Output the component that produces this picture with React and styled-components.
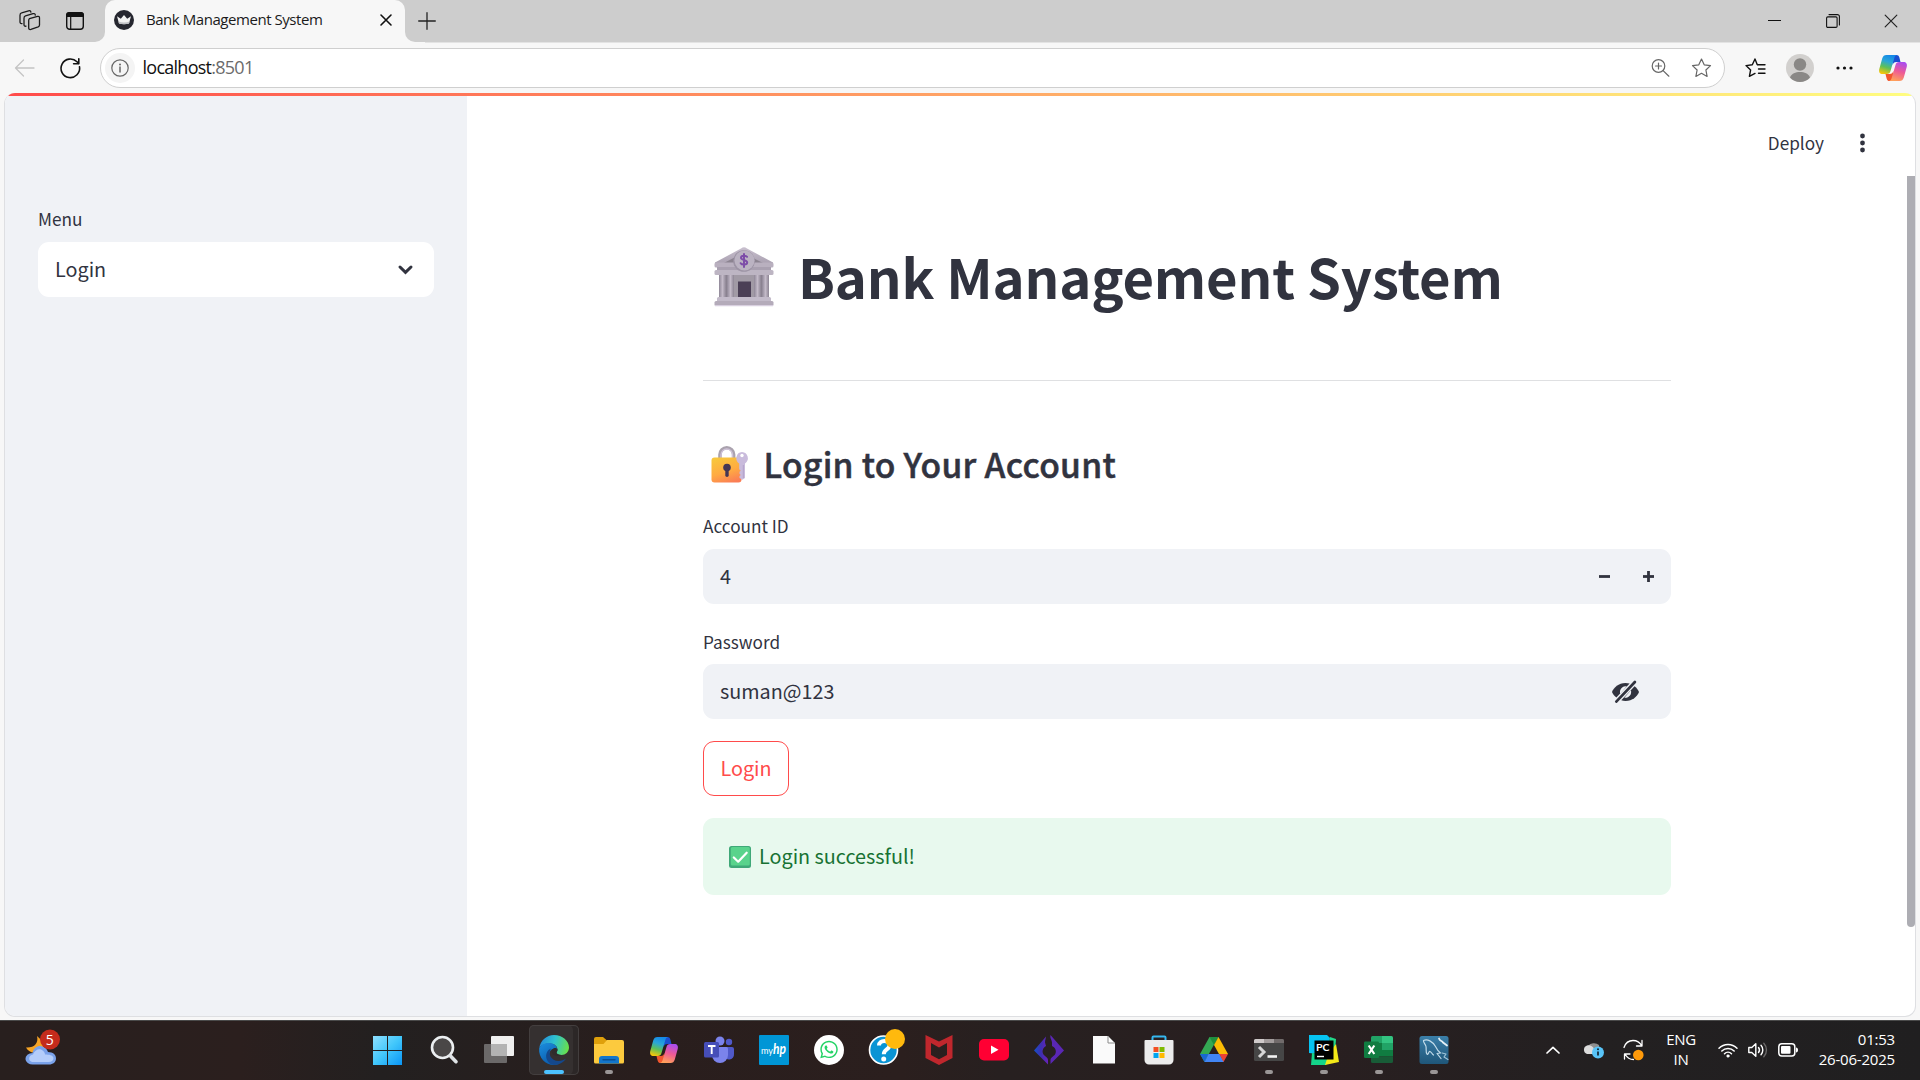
import React from "react";
import styled, { createGlobalStyle } from "styled-components";
import { FaWhatsapp } from "react-icons/fa";

const sourceFont = `"Noto Sans CJK SC", "Noto Sans", sans-serif`;
const systemFont = `"Open Sans", "Noto Sans", sans-serif`;

const GlobalStyle = createGlobalStyle`
  * { box-sizing: border-box; }
  body { margin: 0; overflow: hidden; background: #f7f7f7; }
  svg { display: block; flex: none; overflow: visible; }
  button { margin: 0; padding: 0; border: 0; background: none; color: inherit; font: inherit; }
`;

const Screen = styled.div`
  width: 1920px;
  height: 1080px;
  display: flex;
  flex-direction: column;
  overflow: hidden;
  background: #f7f7f7;
  font-family: ${systemFont};
  color: #1b1b1b;
`;

/* ---------- browser chrome ---------- */

const TabStrip = styled.header`
  height: 43px;
  display: flex;
  background: #cdcdcd;
  border-bottom: 1px solid #e3e3e3;
`;

const StripLeft = styled.div`
  width: 105px;
  height: 42px;
  padding-left: 19px;
  display: flex;
  align-items: center;
  gap: 25px;
  background: #cdcdcd;
  border-bottom-right-radius: 10px;
`;

const CornerBack = styled.div`
  height: 43px;
  background: #f7f7f7;
`;

const Tab = styled.div`
  width: 300px;
  height: 43px;
  padding: 0 13px 3px 9px;
  display: flex;
  align-items: center;
  background: #f7f7f7;
  border-radius: 10px 10px 0 0;
`;

const TabBack = styled.div`
  height: 43px;
  background: linear-gradient(#cdcdcd 50%, #f7f7f7 50%);
`;

const TabTitle = styled.span`
  flex: 1;
  margin-left: 12px;
  font-size: 15px;
  line-height: 22px;
  padding-bottom: 2px;
  letter-spacing: -0.45px;
  white-space: nowrap;
`;

const StripRight = styled.div`
  flex: 1;
  height: 42px;
  padding: 0 22px 0 13px;
  display: flex;
  align-items: center;
  justify-content: space-between;
  background: #cdcdcd;
  border-bottom-left-radius: 10px;
`;

const StripFill = styled.div`
  flex: 1;
  display: flex;
  height: 43px;
  background: linear-gradient(90deg, #f7f7f7 20px, #e3e3e3 20px);
`;

const WindowButtons = styled.div`
  display: flex;
  align-items: center;
  gap: 44.5px;
`;

const Toolbar = styled.div`
  height: 50px;
  padding: 5px 13px 5px 14px;
  display: flex;
  align-items: center;
`;

const NavButtons = styled.div`
  width: 86px;
  display: flex;
  align-items: center;
  gap: 25px;
`;

const AddressBar = styled.div`
  width: 1625px;
  height: 40px;
  padding: 0 12px 0 4px;
  display: flex;
  align-items: center;
  background: #fff;
  border: 1px solid #cfcfcf;
  border-radius: 20px;
`;

const InfoBadge = styled.span`
  width: 30px;
  height: 30px;
  display: grid;
  place-items: center;
  border-radius: 50%;
  background: #f4f4f4;
`;

const Address = styled.span`
  flex: 1;
  margin-left: 7.5px;
  font-size: 18px;
  line-height: 28px;
  letter-spacing: -0.74px;
  padding-bottom: 2px;
  color: #111;
`;

const Port = styled.span`
  color: #6b6b6b;
`;

const AddressActions = styled.div`
  display: flex;
  align-items: center;
  gap: 20px;
`;

const ToolbarActions = styled.div`
  flex: 1;
  display: flex;
  align-items: center;
  justify-content: flex-end;
  gap: 20px;
`;

/* ---------- web page ---------- */

const PageFrame = styled.section`
  width: 1912px;
  height: 924px;
  margin: 0 0 3px 4px;
  border: 1px solid #dedfe2;
  border-top: 0;
  border-radius: 11px;
  overflow: hidden;
  display: flex;
  flex-direction: column;
  background: #fff;
  font-family: ${sourceFont};
  color: #31333f;
`;

const Decoration = styled.div`
  height: 3px;
  flex: none;
  background: linear-gradient(90deg, #ff4b4b, #fffd80);
`;

const PageBody = styled.div`
  flex: 1;
  display: flex;
`;

const Sidebar = styled.aside`
  width: 462px;
  padding: 111px 33px 0;
  background: #f0f2f6;
`;

const Label = styled.label`
  display: block;
  height: 26px;
  font-size: 17.2px;
  line-height: ${(p) => p.$line || 26}px;
`;

const Field = styled.div`
  height: 55px;
  margin-top: ${(p) => p.$gap || 10}px;
  padding: 0 ${(p) => p.$end}px 0 17px;
  display: flex;
  align-items: center;
  justify-content: space-between;
  border-radius: 11px;
  background: ${(p) => (p.$light ? "#fff" : "#f0f2f6")};
`;

const Value = styled.span`
  font-size: 19.8px;
  line-height: 30px;
  padding-bottom: 2px;
  white-space: nowrap;
`;

const Main = styled.main`
  flex: 1;
  display: flex;
  flex-direction: column;
`;

const AppHeader = styled.div`
  height: 94px;
  padding-right: 42px;
  display: flex;
  align-items: center;
  justify-content: flex-end;
  gap: 36px;
`;

const Deploy = styled.span`
  font-size: 17.2px;
  line-height: 26px;
  padding-bottom: 1px;
`;

const Content = styled.div`
  width: 968px;
  margin-left: 236px;
  padding-top: 50px;
  display: flex;
  flex-direction: column;
`;

const Title = styled.h1`
  height: 72px;
  margin: 0;
  padding-left: 11px;
  display: flex;
  align-items: center;
  gap: 24px;
  font-size: 54.4px;
  line-height: 72px;
  font-weight: 700;
  letter-spacing: -0.18px;
  white-space: nowrap;
`;

const Rule = styled.hr`
  width: 100%;
  height: 1px;
  margin: 68px 0 58px;
  border: 0;
  background: #dfe0e2;
`;

const Subtitle = styled.h3`
  height: 50px;
  margin: 0 0 24px;
  padding-left: 8px;
  display: flex;
  align-items: center;
  gap: 14.5px;
  font-size: 33.6px;
  line-height: 50px;
  font-weight: 500;
  letter-spacing: 0.28px;
  -webkit-text-stroke: 0.5px currentColor;
  white-space: nowrap;
`;

const FormGroup = styled.div`
  margin-bottom: ${(p) => p.$after}px;
`;

const Steppers = styled.div`
  display: flex;
  gap: 33px;
`;

const LoginButton = styled.button`
  width: 86px;
  height: 55px;
  border: 1px solid #ff4b4b;
  border-radius: 11px;
  color: #ff4b4b;
  display: grid;
  place-items: center;
`;

const Alert = styled.div`
  height: 77px;
  margin-top: 22px;
  padding-left: 26px;
  display: flex;
  align-items: center;
  gap: 8px;
  border-radius: 11px;
  background: #e8f9ee;
  color: #177233;
`;

const Scrollbar = styled.div`
  width: 8px;
  height: 751px;
  margin-top: 80px;
  border-radius: 0 0 4px 4px;
  background: #adadb3;
`;

/* ---------- taskbar ---------- */

const Taskbar = styled.footer`
  height: 60px;
  display: flex;
  align-items: stretch;
  border-top: 1px solid #4a4a4a;
  background: linear-gradient(90deg, #281f1e 0, #2b1f1e 240px, #232020 380px, #291e1d 640px, #2b1f1e 900px, #272020 1000px, #291f20 1300px, #232021 1600px, #201f20 1920px);
  color: #fff;
`;

const WeatherSlot = styled.div`
  width: 361px;
  padding: 0 0 7px 25px;
  display: flex;
  align-items: center;
`;

const AppSlot = styled.div`
  width: 55px;
  padding-bottom: 1px;
  display: flex;
  align-items: center;
  justify-content: center;
`;

const AppTile = styled.div`
  width: 50px;
  height: 50px;
  display: flex;
  flex-direction: column;
  align-items: center;
  padding-top: 10px;
  gap: 5px;
  border-radius: 5px;
  background: ${(p) => (p.$active ? "#353030" : "transparent")};
  box-shadow: ${(p) => (p.$active ? "inset 0 0 0 1px #433e3e, inset -6px 0 0 #2c2727" : "none")};
`;

const RunMark = styled.span`
  width: ${(p) => (p.$state === "active" ? 20 : 8)}px;
  height: 4px;
  border-radius: 2px;
  background: ${(p) => (p.$state === "active" ? "#4cc2ff" : p.$state ? "#9a9696" : "transparent")};
`;

const Tray = styled.div`
  flex: 1;
  padding: 0 24.5px 1px 85px;
  display: flex;
  align-items: center;
`;

const TrayItem = styled.span`
  margin-right: ${(p) => p.$after}px;
`;

const TrayText = styled.div`
  width: ${(p) => p.$w}px;
  margin-right: ${(p) => p.$after || 0}px;
  font-size: 15px;
  line-height: 20px;
  text-align: ${(p) => p.$align};
  letter-spacing: ${(p) => p.$track}px;
  padding-bottom: 2px;
  white-space: nowrap;
`;

/* ---------- drawings ---------- */

const line = (w, c = "#1b1b1b") => ({
  fill: "none",
  stroke: c,
  strokeWidth: w,
  strokeLinecap: "round",
  strokeLinejoin: "round",
});

const WorkspacesIcon = () => (
  <svg width="22" height="22" viewBox="0 0 22 22" {...line(1.3)}>
    <path d="M10.5 9.2l8-2.2c1.2-.3 2 .3 2 1.400v7.300c0 .9-.5 1.500-1.300 1.800l-7.300 2.500c-1.300.4-2.200-.2-2.200-1.500v-7.300c0-1 .1-1.700.8-2z" transform="translate(0 -.6)" />
    <path d="M7 16.200c-1.200.2-2-.3-2-1.500V8.200c0-1.200.4-1.900 1.500-2.300l7.500-2.200c1.400-.4 2.200.1 2.300 1.400" />
    <path d="M3 13.600c-1.300.2-2-.4-2-1.600V5.200C1 4 1.500 3.200 2.600 2.900l7-2.100c1.300-.3 2.100.1 2.300 1.300" />
  </svg>
);

const TabActionsIcon = () => (
  <svg width="18" height="18" viewBox="0 0 18 18">
    <rect x=".7" y=".7" width="16.600" height="16.600" rx="3" {...line(1.400, "#111")} />
    <path d="M0 5V3.200A3.200 3.200 0 0 1 3.200 0h11.600A3.200 3.200 0 0 1 18 3.200V5z" fill="#111" />
    <path d="M4.700 5v12" {...line(1.200, "#111")} />
  </svg>
);

const CrownFavicon = () => (
  <svg width="20" height="20" viewBox="0 0 20 20">
    <circle cx="10" cy="10" r="10" fill="#262730" />
    <path d="M3 6.300l3.800 2.500L10 5l3.200 3.800L17 6.300l-2 7.200c-3 1-7 1-10 0z" fill="#f2f2f2" />
    <path d="M4.400 11.500c3.500 1.200 7.700 1.200 11.200 0l-.6 2c-3 1-7 1-10 0z" fill="#bfc0c4" />
  </svg>
);

const CloseIcon = ({ size, w, c }) => (
  <svg width={size} height={size} viewBox="0 0 12 12">
    <path d="M1 1l10 10M11 1L1 11" {...line(w, c)} />
  </svg>
);

const PlusIcon = () => (
  <svg width="18" height="18" viewBox="0 0 18 18">
    <path d="M9 .7v16.600M.7 9h16.600" {...line(1.300, "#222")} />
  </svg>
);

const BackIcon = () => (
  <svg width="21" height="18" viewBox="0 0 21 18">
    <path d="M20 9H1.500M9.500 1L1.500 9l8 8" {...line(1.300, "#c4c4c4")} />
  </svg>
);

const ReloadIcon = () => (
  <svg width="21" height="21" viewBox="0 0 21 21">
    <path d="M19.500 8.700A9.300 9.300 0 1 1 17 3.800l1.300 1.500" {...line(1.600, "#111")} />
    <path d="M18.800.8v5h-5.200" {...line(1.600, "#111")} />
  </svg>
);

const InfoIcon = () => (
  <svg width="18" height="18" viewBox="0 0 18 18">
    <circle cx="9" cy="9" r="8.200" {...line(1.200, "#666")} />
    <path d="M9 8v5" {...line(1.500, "#666")} />
    <circle cx="9" cy="5.400" r="1" fill="#666" />
  </svg>
);

const ZoomIcon = () => (
  <svg width="19" height="18" viewBox="0.500 0 19 18" {...line(1.200, "#666")}>
    <circle cx="7" cy="7" r="6.300" />
    <path d="M7 4v6M4 7h6M11.600 11.600l5.800 5.600" />
  </svg>
);

const starPath = "M10 1l2.700 5.800 6.300.8-4.600 4.400 1.200 6.400L10 15.300l-5.600 3.100 1.200-6.400L1 7.600l6.300-.8z";

const StarIcon = () => (
  <svg width="21" height="20" viewBox="0 0 20 20">
    <path d={starPath} {...line(1.200, "#666")} />
  </svg>
);

const FavoritesIcon = () => (
  <svg width="21" height="20" viewBox="0 0 21 20" {...line(1.400, "#111")}>
    <path d="M12.200 6.500L10 1 7.300 6.800 1 7.600 5.600 12l-1.200 6.400 5.600-3" />
    <path d="M12.500 6.700H20M13.500 11H20M13.500 15.300H20" />
  </svg>
);

const ProfileIcon = () => (
  <svg width="28" height="28" viewBox="0 0 28 28">
    <circle cx="14" cy="14" r="14" fill="#d2d0ce" />
    <circle cx="14" cy="10.500" r="6.200" fill="#8a8886" />
    <path d="M4 23.500c1.500-4 5.500-5.500 10-5.500s8.500 1.500 10 5.500C21.500 26.400 18 28 14 28S6.500 26.400 4 23.500z" fill="#8a8886" />
  </svg>
);

const MoreIcon = () => (
  <svg width="25" height="4" viewBox="-2 0 25 4" fill="#111">
    <circle cx="2" cy="2" r="1.600" />
    <circle cx="8.500" cy="2" r="1.600" />
    <circle cx="15" cy="2" r="1.600" />
  </svg>
);

const CopilotIcon = ({ id, w = 28 }) => (
  <svg width={w} height={(w * 26) / 28} viewBox="0 0 28 26">
    <defs>
      <linearGradient id={`${id}a`} x1="0.600" y1="0" x2="0.300" y2="1">
        <stop offset="0" stopColor="#1488e8" />
        <stop offset=".35" stopColor="#2aa6d8" />
        <stop offset=".65" stopColor="#5cc05a" />
        <stop offset="1" stopColor="#f7c60a" />
      </linearGradient>
      <linearGradient id={`${id}b`} x1="0.700" y1="0" x2="0.400" y2="1">
        <stop offset="0" stopColor="#a94df0" />
        <stop offset=".5" stopColor="#ee5a96" />
        <stop offset="1" stopColor="#ffa05a" />
      </linearGradient>
    </defs>
    <path d="M13 0h4.500c1.500 0 2.300.8 2.800 2.300L21.500 7h-4c-2.500 0-3.200 1-3.800 3z" fill="#1a4fd0" />
    <path d="M15 26h-4.500c-1.500 0-2.300-.8-2.800-2.300L6.500 19h4c2.500 0 3.200-1 3.800-3z" fill="#f2562e" />
    <path d="M7.500 0H18c-1.500.3-2.200 1.400-2.800 3.500L11.500 16c-.7 2.200-1.600 3-3.800 3H3.500C.8 19-.5 17 .3 14L3.200 3.500C4 1 5.200 0 7.500 0z" fill={`url(#${id}a)`} />
    <path d="M20.500 26H10c1.500-.3 2.200-1.400 2.800-3.500L16.500 10c.7-2.200 1.600-3 3.800-3h4.200c2.700 0 4 2 3.200 5l-2.900 10.500c-.8 2.500-2 3.500-4.300 3.500z" fill={`url(#${id}b)`} />
  </svg>
);

const BankEmoji = () => (
  <svg width="60" height="60" viewBox="0 -1 60 60">
    <defs>
      <linearGradient id="col" x1="0" x2="1">
        <stop offset="0" stopColor="#8f8797" />
        <stop offset=".5" stopColor="#c3bac8" />
        <stop offset="1" stopColor="#8d8594" />
      </linearGradient>
      <linearGradient id="slab" x1="0" y1="0" x2="0" y2="1">
        <stop offset="0" stopColor="#c9c0cf" />
        <stop offset="1" stopColor="#a39aaa" />
      </linearGradient>
    </defs>
    <path d="M5 26h50v27H5z" fill="#8a8290" />
    <path d="M20 26h20v27H20z" fill="#a19aa5" />
    <path d="M27 1.500Q30 -.8 33 1.500L59 15.500V20H1V15.500z" fill="url(#slab)" />
    <path d="M29 6L50 16.500H9z" fill="#8b8390" />
    <rect x="0.500" y="15.500" width="59" height="5" rx="1.500" fill="#b9b0bf" />
    <path d="M3 20h54v4H3z" fill="#a9a0b0" />
    <rect x="0.500" y="23" width="59" height="5" rx="1.500" fill="#bdb5c3" />
    {[5, 13, 40, 48].map((x) => (
      <rect key={x} x={x} y="28" width="7" height="23" fill="url(#col)" />
    ))}
    <rect x="24" y="34.500" width="13" height="16" fill="#4b3f56" />
    <rect x="3" y="50" width="54" height="5" rx="1.500" fill="#c3bbca" />
    <rect x="0.500" y="54" width="59" height="5" rx="1.500" fill="#b4abba" />
    <path d="M1 58.600h58" stroke="#d8cfdf" strokeWidth="1.200" />
    <circle cx="30" cy="14" r="10.800" fill="#9d94a5" />
    <circle cx="30.500" cy="13.500" r="10" fill="#bbb3c2" />
    <path d="M33 9.800c-.7-1.200-5.900-1.800-6 .9 0 2.800 6.200 1.700 6.200 4.800 0 2.700-5.600 2.400-6.500.7M30 7v13" {...line(2, "#7d4da8")} />
  </svg>
);

const LockEmoji = () => (
  <svg width="38" height="38" viewBox="0 0 38 38">
    <defs>
      <linearGradient id="lock" x1="0.300" y1="0" x2="0.700" y2="1">
        <stop offset="0" stopColor="#f8c63c" />
        <stop offset=".55" stopColor="#ffab42" />
        <stop offset="1" stopColor="#fb7d55" />
      </linearGradient>
    </defs>
    <path d="M9 14V9.500a6.800 6.800 0 0 1 13.600 0V14" fill="none" stroke="#aaa2ae" strokeWidth="3.600" />
    <path d="M10 14V9.700a5.800 5.800 0 0 1 11.600 0V14" fill="none" stroke="#cfc2d9" strokeWidth="1.300" />
    <rect x=".5" y="12.500" width="30" height="25" rx="3" fill="url(#lock)" />
    <circle cx="16" cy="22.500" r="3.800" fill="#443654" />
    <path d="M14.300 23h3.400v7.200a1.700 1.700 0 0 1-3.400 0z" fill="#443654" />
    <path d="M31 7a6.200 6.200 0 0 1 3 11.400V33l-2.600 1.800L28.500 33v-2l1.200-1-1.200-1.300v-2l1.200-1-1.500-1.500v-5.800A6.200 6.200 0 0 1 31 7z" fill="#c9bbdc" />
    <circle cx="31" cy="10.500" r="1.700" fill="#fff" />
    <path d="M32.300 20v13" stroke="#b3a3ca" strokeWidth="1" />
  </svg>
);

const CheckEmoji = () => (
  <svg width="22" height="22" viewBox="0 0 22 22">
    <rect width="22" height="22" rx="2.500" fill="#3fa878" />
    <rect x="1.800" y="1" width="19" height="18.500" rx="1.500" fill="#59d38c" />
    <path d="M4.800 11.500l4.400 4.200 8.500-9" {...line(2.200, "#fff")} />
  </svg>
);

const ChevronDown = () => (
  <svg width="15" height="10" viewBox="0 0 15 10">
    <path d="M2 2l5.500 5.400L13 2" {...line(3, "#31333f")} strokeLinejoin="miter" />
  </svg>
);

const KebabIcon = () => (
  <svg width="5" height="20" viewBox="0 0 5 20" fill="#31333f">
    <circle cx="2.500" cy="3" r="2.400" />
    <circle cx="2.500" cy="10" r="2.400" />
    <circle cx="2.500" cy="17" r="2.400" />
  </svg>
);

const StepIcon = ({ plus }) => (
  <svg width="11" height="11" viewBox="0 0 11 11" fill="#31333f">
    <rect y="4.100" width="11" height="2.800" />
    {plus && <rect x="4.100" width="2.800" height="11" />}
  </svg>
);

const EyeOffIcon = () => (
  <svg width="27" height="22" viewBox="0 0 27 22">
    <path d="M13.500 2C6.500 2 1.800 6.500 0 11c.9 2 2.300 4 4.400 5.600L17.600 2.600C16.300 2.200 15 2 13.500 2z" fill="#31333f" />
    <path d="M22.600 5.300L9.300 19.300c1.300.5 2.700.7 4.200.7 7 0 11.700-4.500 13.500-9-.9-2-2.300-4.100-4.400-5.700z" fill="#31333f" />
    <path d="M8.200 12.700A5.800 5.800 0 0 1 14.800 5.300L8.200 12.700zM18.900 9.300a5.800 5.800 0 0 1-6.600 7.400z" fill="#f0f2f6" />
    <path d="M4.300 20.600L22.900 1" stroke="#31333f" strokeWidth="2.700" strokeLinecap="round" />
  </svg>
);

const WeatherIcon = () => (
  <svg width="36" height="36" viewBox="0 0 36 36">
    <path d="M12 7c1.800 7-2.500 12-11 11.500 2 4 7 6.500 12 4l8-7z" fill="#f6a426" />
    <path d="M8 35.500a7 5.500 0 0 1-.5-11.500c1-5 5-7.500 9-6.800 3.500.5 5.500 2.800 6.500 5.800 5 .3 8 2.300 8 6.500 0 3.800-3 6-7 6z" fill="#7aa2ea" />
    <path d="M7 33a5 4 0 0 1 1-7.500c1.500-4 5-6 8-5 2.500 1 4 3 4 5 4 0 8 .5 8.500 3.500 0 2.500-2 4-5 4z" fill="#b4cdfa" />
    <circle cx="25" cy="10.500" r="10" fill="#c42b1c" />
    <text x="24.800" y="15.500" fontSize="14" textAnchor="middle" fill="#fff" fontFamily="Open Sans, sans-serif">5</text>
  </svg>
);

const Icon30 = ({ children }) => (
  <svg width="30" height="30" viewBox="0 0 30 30">{children}</svg>
);

const WindowsLogo = () => (
  <Icon30>
    <defs>
      <linearGradient id="win" x1="0" y1="0" x2="1" y2="1">
        <stop offset="0" stopColor="#8fe0ff" />
        <stop offset=".5" stopColor="#42c7fb" />
        <stop offset="1" stopColor="#0a95f5" />
      </linearGradient>
    </defs>
    <path d="M-1 1H13V15H-1zM14 1H28V15H14zM-1 16H13V30H-1zM14 16H28V30H14z" fill="url(#win)" />
  </Icon30>
);

const SearchLogo = () => (
  <Icon30>
    <circle cx="13.500" cy="12.500" r="10.500" fill="#4a4747" stroke="#eceff1" strokeWidth="2.600" />
    <path d="M21.500 21l5.500 5.700" {...line(3.600, "#dfe3e6")} />
  </Icon30>
);

const TaskViewLogo = () => (
  <Icon30>
    <rect x="7" y="1" width="23" height="20" rx="1" fill="#efefef" />
    <rect x="0" y="9" width="23" height="19" rx="1" fill="#6b6969" />
    <path d="M7 9h16v12H8a1 1 0 0 1-1-1z" fill="#b3b3b3" />
  </Icon30>
);

const EdgeLogo = () => (
  <Icon30>
    <defs>
      <linearGradient id="edgeTop" x1="0" y1="0.300" x2="1" y2="0.500">
        <stop offset="0" stopColor="#2389dc" />
        <stop offset=".5" stopColor="#2fc3cf" />
        <stop offset="1" stopColor="#68e04c" />
      </linearGradient>
      <linearGradient id="edgeLow" x1="0" y1="0" x2=".5" y2="1">
        <stop offset="0" stopColor="#1b8fe0" />
        <stop offset="1" stopColor="#0b5cad" />
      </linearGradient>
    </defs>
    <path d="M.3 13C1.500 5.500 7.500 0 15 0c8.500 0 15 6 15 12.500 0 4.500-3.500 7.500-7.500 7.500-3 0-5-1-5-2.200 0-.8 1-1.300 1-3.300 0-3-3-6-7.500-6C5.500 8.500 1.500 10.500.3 13z" fill="url(#edgeTop)" />
    <path d="M.2 13.200C1.500 9.800 5.800 8 10 8c4.500 0 8 3 8.200 6-4-2-9.200 1.500-7.700 7.500 1 4 4.500 7.500 9 7.500A14.500 14.500 0 0 1 15 30C6.500 30-.8 22.500.2 13.200z" fill="url(#edgeLow)" />
    <path d="M12 13.500c-3.500 5 0 12.500 7.500 12.500 3 0 5.500-1 7.500-2.500-2 3.500-6.500 6.300-11.500 6.500C9 29.500 6 23 7.500 18.500c.8-2.500 2.500-4.200 4.500-5z" fill="#14488c" />
    <path d="M18.500 14.500c0 2-1 2.500-1 3.300 0 1.200 2 2.200 5 2.200-2.500 1.200-6 1.300-8.300-.5-1.800-1.500-2-4.500.3-6 1.500-.8 3-.5 4 1z" fill="#302c2c" />
  </Icon30>
);

const ExplorerLogo = () => (
  <Icon30>
    <path d="M0 4a2 2 0 0 1 2-2h7l4 3.500V10H0z" fill="#dfa00b" />
    <path d="M0 9h9.500L13 5h15a2 2 0 0 1 2 2v20a1.500 1.500 0 0 1-1.500 1.500h-27A1.500 1.500 0 0 1 0 27z" fill="#fcca3e" />
    <path d="M5 28.500V24a3 3 0 0 1 3-3h14a3 3 0 0 1 3 3v4.500z" fill="#1376cb" />
    <path d="M9 24.800h12" {...line(1.400, "#0b4f93")} />
  </Icon30>
);

const TeamsLogo = () => (
  <Icon30>
    <circle cx="25" cy="7" r="3.200" fill="#5059c9" />
    <path d="M20 12h8a2 2 0 0 1 2 2v5a5 5 0 0 1-10 1z" fill="#5059c9" />
    <circle cx="16" cy="6" r="4.500" fill="#7b83eb" />
    <path d="M9 12h13.500a1.500 1.500 0 0 1 1.500 1.500V20a8 8 0 0 1-16 0z" fill="#7b83eb" />
    <rect x="0" y="7" width="15" height="15.500" rx="1.500" fill="#464eb8" />
    <path d="M4 11h7.500M7.700 11v8" stroke="#fff" strokeWidth="1.900" fill="none" />
  </Icon30>
);

const MyHpLogo = () => (
  <Icon30>
    <rect width="30" height="30" rx="1" fill="#0096d6" />
    <text x="2" y="18.500" fontSize="9" fill="#fff" fontFamily="Lato, sans-serif" textLength="12" lengthAdjust="spacingAndGlyphs">my</text>
    <text x="14" y="19" fontSize="14.500" fontStyle="italic" fontWeight="700" fill="#fff" fontFamily="Lato, sans-serif" textLength="13" lengthAdjust="spacingAndGlyphs">hp</text>
  </Icon30>
);

const WhatsAppLogo = () => (
  <Icon30>
    <circle cx="15" cy="15" r="15" fill="#fff" />
    <FaWhatsapp x="5" y="4.500" size="20" color="#25d366" />
  </Icon30>
);

const HelpLogo = () => (
  <Icon30>
    <circle cx="14.500" cy="15" r="14" fill="#0a94d4" stroke="#fff" strokeWidth="1.600" />
    <path d="M10 10.500c0-6 10.500-6 10.500-.3 0 4.500-5.700 4-5.700 9" fill="none" stroke="#fff" strokeWidth="4" />
    <circle cx="14.700" cy="24" r="2.500" fill="#fff" />
    <circle cx="26" cy="4" r="10" fill="#ffb90d" />
  </Icon30>
);

const McAfeeLogo = () => (
  <Icon30>
    <path d="M1.500 0l13.500 6.500L28.500 0v23L15 30 1.500 23zM7 8v12l8 4.300L23 20V8l-8 4.500z" fill="#c0272d" fillRule="evenodd" />
  </Icon30>
);

const YouTubeLogo = () => (
  <Icon30>
    <rect y="4" width="30" height="21.500" rx="5" fill="#ff0033" />
    <path d="M12 10.500v8.500l7.500-4.200z" fill="#fff" />
  </Icon30>
);

const DiamondLogo = () => (
  <Icon30>
    <defs>
      <linearGradient id="dia" x1="0" x2="1">
        <stop offset="0" stopColor="#1450c8" />
        <stop offset=".5" stopColor="#3d2fb0" />
        <stop offset="1" stopColor="#6a22b8" />
      </linearGradient>
    </defs>
    <path d="M12 1.500c-.3 3-1 3.500-1 6L12 11c-3 1.500-4.500 5.500-2.500 8.500 1.500 2 4.500 3 4.500 5.500V29.500L0 15.500z" fill="url(#dia)" />
    <path d="M16.500 0c-.8 3 1.200 4.500 1.500 7.500l0 3.500c3.500 1.500 5 5.500 3 8.500-1.500 2-4.500 3-4.500 5.500V29L30 15.500z" fill="#5a27b4" />
  </Icon30>
);

const FileLogo = () => (
  <Icon30>
    <path d="M4 1h15l7 7v20.500H4z" fill="#fafafa" />
    <path d="M19 1v7h7z" fill="#fff" stroke="#8b8b8b" strokeWidth="1" />
  </Icon30>
);

const StoreLogo = () => (
  <Icon30>
    <path d="M8.500 6V2.500Q8.500 1.500 9.500 1.500h11q1 0 1 1V6" fill="none" stroke="#35b8f0" strokeWidth="2" />
    <path d="M.5 6q0-1 1-1h27q1 0 1 1v19a4.500 4.500 0 0 1-4.500 4.500H5A4.500 4.500 0 0 1 .5 25z" fill="#ececec" />
    <path d="M9.500 12h5v5h-5z" fill="#f25022" />
    <path d="M15.500 12h5v5h-5z" fill="#7fba00" />
    <path d="M9.500 18h5v5h-5z" fill="#00a4ef" />
    <path d="M15.500 18h5v5h-5z" fill="#ffb900" />
  </Icon30>
);

const DriveLogo = () => (
  <Icon30>
    <path d="M10.500 2h9l-5 8.500L5.500 27 1 19z" fill="#34a853" />
    <path d="M10.500 2h9l-4.500 8z" fill="#1e8e3e" />
    <path d="M19.500 2L29 19h-9L15 10z" fill="#fbbc04" />
    <path d="M1 19h8.500l-4 8z" fill="#1967d2" />
    <path d="M9.500 19h11l4.500 8H5.500z" fill="#4285f4" />
    <path d="M20.300 19H29l-4.500 8z" fill="#ea4335" />
  </Icon30>
);

const TerminalLogo = () => (
  <Icon30>
    <rect y="4" width="30" height="22" rx="1.500" fill="#464646" />
    <path d="M0 8V5.500A1.500 1.500 0 0 1 1.500 4H10v4z" fill="#cfcaca" />
    <path d="M10 4h10v4H10z" fill="#a29c9c" />
    <path d="M20 4h8.500A1.500 1.500 0 0 1 30 5.500V8H20z" fill="#716b6b" />
    <path d="M5 12l5 5-5 5" fill="none" stroke="#d6d6d6" strokeWidth="3" />
    <path d="M13.500 21.500H23" stroke="#f3f3f3" strokeWidth="2.600" />
  </Icon30>
);

const PyCharmLogo = () => (
  <Icon30>
    <path d="M0 0h18l3 3-3 17L0 18z" fill="#07c3f2" />
    <path d="M21 2l6 2-1 14-8 2z" fill="#21d789" />
    <path d="M3 18l-1 12h15l5-10z" fill="#14d58a" />
    <path d="M27 9l3 18-14 3 4-12z" fill="#f3e918" />
    <rect x="5.500" y="5.500" width="19" height="19" fill="#000" />
    <text x="7" y="15.500" fontSize="9.500" fontWeight="700" fill="#fff" fontFamily="Lato, sans-serif" textLength="13.500" lengthAdjust="spacingAndGlyphs">PC</text>
    <path d="M8 21.500h7" stroke="#fff" strokeWidth="1.400" />
  </Icon30>
);

const ExcelLogo = () => (
  <Icon30>
    <path d="M7 2.500A1.500 1.500 0 0 1 8.500 1H18v7H7z" fill="#21a366" />
    <path d="M18 1h9.500A1.500 1.500 0 0 1 29 2.500V8H18z" fill="#33c481" />
    <path d="M7 8h11v7H7z" fill="#107c41" />
    <path d="M18 8h11v7H18z" fill="#21a366" />
    <path d="M7 15h22v6.500H7z" fill="#107c41" />
    <path d="M7 21.500h22v5a1.500 1.500 0 0 1-1.500 1.500h-19A1.500 1.500 0 0 1 7 26.500z" fill="#185c37" />
    <rect x="0" y="6.500" width="15" height="16.500" rx="1.200" fill="#107c41" />
    <path d="M4.700 10.500l5.600 8.500M10.300 10.500L4.700 19" stroke="#fff" strokeWidth="2.200" fill="none" />
  </Icon30>
);

const MySqlLogo = () => (
  <Icon30>
    <defs>
      <linearGradient id="dolphin" x1="0" y1="0" x2="0" y2="1">
        <stop offset="0" stopColor="#3b7fa9" />
        <stop offset="1" stopColor="#1f5679" />
      </linearGradient>
    </defs>
    <rect x=".5" y="1" width="29" height="28" rx="2.500" fill="url(#dolphin)" />
    <path d="M4.500 5.500c4-2 9 1 12 6 1.500 3 2.500 5 5 6.500l-3.500.5 4 5M4.500 5.500c-.5 2 2 3.500 2.500 6s-.5 6 1 7.500 1.500-3 3-2.500 2 2.500 3.500 3.500" {...line(1.200, "#c3dcea")} />
    <path d="M20 3.500c1 3 3 2 4 4l4 3" {...line(1.800, "#e6f1f7")} />
    <path d="M23 18l4 1-2 3 4 2.500" {...line(1.200, "#9fc3d8")} />
  </Icon30>
);

const ChevronUp = () => (
  <svg width="14" height="8" viewBox="0 0 14 8">
    <path d="M1 7l6-5.700L13 7" {...line(1.700, "#fff")} />
  </svg>
);

const CloudIcon = () => (
  <svg width="21" height="18" viewBox="0 0 21 18">
    <path d="M5 5a7 6 0 0 1 11-1l1 8H5z" fill="#8f8f8f" />
    <path d="M4 13a4.500 4.500 0 0 1 0-8.500c3-1 5.500.5 7 3V13z" fill="#dcdcdc" />
    <circle cx="15" cy="11.500" r="6" fill="#58c4f8" />
    <path d="M15 10.500v4" stroke="#10222e" strokeWidth="1.700" />
    <circle cx="15" cy="8.300" r="1" fill="#10222e" />
  </svg>
);

const SyncIcon = () => (
  <svg width="21" height="22" viewBox="0 0 21 22">
    <path d="M1 8.500C2.500 4 6 1.500 10 1.500c4 0 7 2 8.700 5.300M19 1.500v5.500h-5.500M1.500 20v-5h5.500M2.300 15.500C4 18.500 7 20.500 10.500 20.500" {...line(1.300, "#fff")} />
    <circle cx="15.300" cy="16" r="5.300" fill="#ff9a0a" />
  </svg>
);

const WifiIcon = () => (
  <svg width="20" height="15" viewBox="0 0 20 15" {...line(1.500, "#fff")}>
    <path d="M1 5.200a12.700 12.700 0 0 1 18 0M3.800 8a8.800 8.800 0 0 1 12.400 0M6.500 10.700a5 5 0 0 1 7 0" />
    <circle cx="10" cy="13" r="1.300" fill="#fff" strokeWidth=".5" />
  </svg>
);

const VolumeIcon = () => (
  <svg width="20" height="16" viewBox="0 0 20 16" {...line(1.400, "#fff")}>
    <path d="M.8 5.500v5h3l4 3.700V1.800l-4 3.700z" />
    <path d="M10.500 5.500a4 4 0 0 1 0 5M13 3.300a7 7 0 0 1 0 9.400" />
    <path d="M15.800 1.200a10 10 0 0 1 0 13.600" stroke="#6a6868" />
  </svg>
);

const BatteryIcon = () => (
  <svg width="20" height="14" viewBox="0 0 20 14">
    <rect x=".8" y=".8" width="16" height="12.200" rx="3" {...line(1.500, "#fff")} />
    <rect x="3" y="3" width="9.500" height="7.800" rx="1" fill="#fff" />
    <path d="M18 4.500c1.300.3 2 1 2 2.400s-.7 2.200-2 2.500z" fill="#fff" />
  </svg>
);

const MinimizeIcon = () => (
  <svg width="13" height="13" viewBox="0 0 13 13">
    <path d="M0 5.500h13" stroke="#111" strokeWidth="1" />
  </svg>
);

const RestoreIcon = () => (
  <svg width="14" height="14" viewBox="0 0 14 14">
    <rect x=".6" y="2.900" width="10.500" height="10.500" rx="1.200" {...line(1.100, "#111")} />
    <path d="M3 .6h8.400a2 2 0 0 1 2 2V11" {...line(1.100, "#111")} />
  </svg>
);

const apps = [
  { name: "start", Logo: WindowsLogo },
  { name: "search", Logo: SearchLogo },
  { name: "taskview", Logo: TaskViewLogo },
  { name: "edge", Logo: EdgeLogo, state: "active" },
  { name: "explorer", Logo: ExplorerLogo, state: "open" },
  { name: "copilot", Logo: () => <Icon30><g transform="translate(1 2)"><CopilotIcon id="task" /></g></Icon30> },
  { name: "teams", Logo: TeamsLogo },
  { name: "myhp", Logo: MyHpLogo },
  { name: "whatsapp", Logo: WhatsAppLogo },
  { name: "help", Logo: HelpLogo },
  { name: "mcafee", Logo: McAfeeLogo },
  { name: "youtube", Logo: YouTubeLogo },
  { name: "diamond", Logo: DiamondLogo },
  { name: "file", Logo: FileLogo },
  { name: "store", Logo: StoreLogo },
  { name: "drive", Logo: DriveLogo },
  { name: "terminal", Logo: TerminalLogo, state: "open" },
  { name: "pycharm", Logo: PyCharmLogo, state: "open" },
  { name: "excel", Logo: ExcelLogo, state: "open" },
  { name: "mysql", Logo: MySqlLogo, state: "open" },
];

export default function App() {
  return (
    <Screen>
      <GlobalStyle />
      <TabStrip>
        <CornerBack>
          <StripLeft>
            <WorkspacesIcon />
            <TabActionsIcon />
          </StripLeft>
        </CornerBack>
        <TabBack>
          <Tab>
            <CrownFavicon />
            <TabTitle>Bank Management System</TabTitle>
            <CloseIcon size={12} w={1.6} c="#111" />
          </Tab>
        </TabBack>
        <StripFill>
          <StripRight>
            <PlusIcon />
            <WindowButtons>
              <MinimizeIcon />
              <RestoreIcon />
              <CloseIcon size={14} w={1} c="#222" />
            </WindowButtons>
          </StripRight>
        </StripFill>
      </TabStrip>
      <Toolbar>
        <NavButtons>
          <BackIcon />
          <ReloadIcon />
        </NavButtons>
        <AddressBar>
          <InfoBadge>
            <InfoIcon />
          </InfoBadge>
          <Address>
            localhost<Port>:8501</Port>
          </Address>
          <AddressActions>
            <ZoomIcon />
            <StarIcon />
          </AddressActions>
        </AddressBar>
        <ToolbarActions>
          <FavoritesIcon />
          <ProfileIcon />
          <MoreIcon />
          <CopilotIcon id="bar" />
        </ToolbarActions>
      </Toolbar>

      <PageFrame>
        <Decoration />
        <PageBody>
          <Sidebar>
            <Label $line={24}>Menu</Label>
            <Field $light $gap={9} $end={21}>
              <Value>Login</Value>
              <ChevronDown />
            </Field>
          </Sidebar>
          <Main>
            <AppHeader>
              <Deploy>Deploy</Deploy>
              <KebabIcon />
            </AppHeader>
            <Content>
              <Title>
                <BankEmoji />
                Bank Management System
              </Title>
              <Rule />
              <Subtitle>
                <LockEmoji />
                Login to Your Account
              </Subtitle>
              <FormGroup $after={24}>
                <Label>Account ID</Label>
                <Field $end={17}>
                  <Value>4</Value>
                  <Steppers>
                    <StepIcon />
                    <StepIcon plus />
                  </Steppers>
                </Field>
              </FormGroup>
              <FormGroup $after={22}>
                <Label $line={28}>Password</Label>
                <Field $end={32}>
                  <Value>suman@123</Value>
                  <EyeOffIcon />
                </Field>
              </FormGroup>
              <LoginButton>
                <Value>Login</Value>
              </LoginButton>
              <Alert>
                <CheckEmoji />
                <Value>Login successful!</Value>
              </Alert>
            </Content>
          </Main>
          <Scrollbar />
        </PageBody>
      </PageFrame>

      <Taskbar>
        <WeatherSlot>
          <WeatherIcon />
        </WeatherSlot>
        {apps.map(({ name, Logo, state }) => (
          <AppSlot key={name}>
            <AppTile $active={state === "active"}>
              <Logo />
              <RunMark $state={state} />
            </AppTile>
          </AppSlot>
        ))}
        <Tray>
          <TrayItem $after={22.5}><ChevronUp /></TrayItem>
          <TrayItem $after={19}><CloudIcon /></TrayItem>
          <TrayItem $after={19.5}><SyncIcon /></TrayItem>
          <TrayText $w={36} $after={19} $align="center" $track={-0.3}>
            ENG
            <br />
            IN
          </TrayText>
          <TrayItem $after={10}><WifiIcon /></TrayItem>
          <TrayItem $after={10}><VolumeIcon /></TrayItem>
          <TrayItem $after={10}><BatteryIcon /></TrayItem>
          <TrayText $w={87} $align="right" $track={-0.2}>
            01:53
            <br />
            26-06-2025
          </TrayText>
        </Tray>
      </Taskbar>
    </Screen>
  );
}
